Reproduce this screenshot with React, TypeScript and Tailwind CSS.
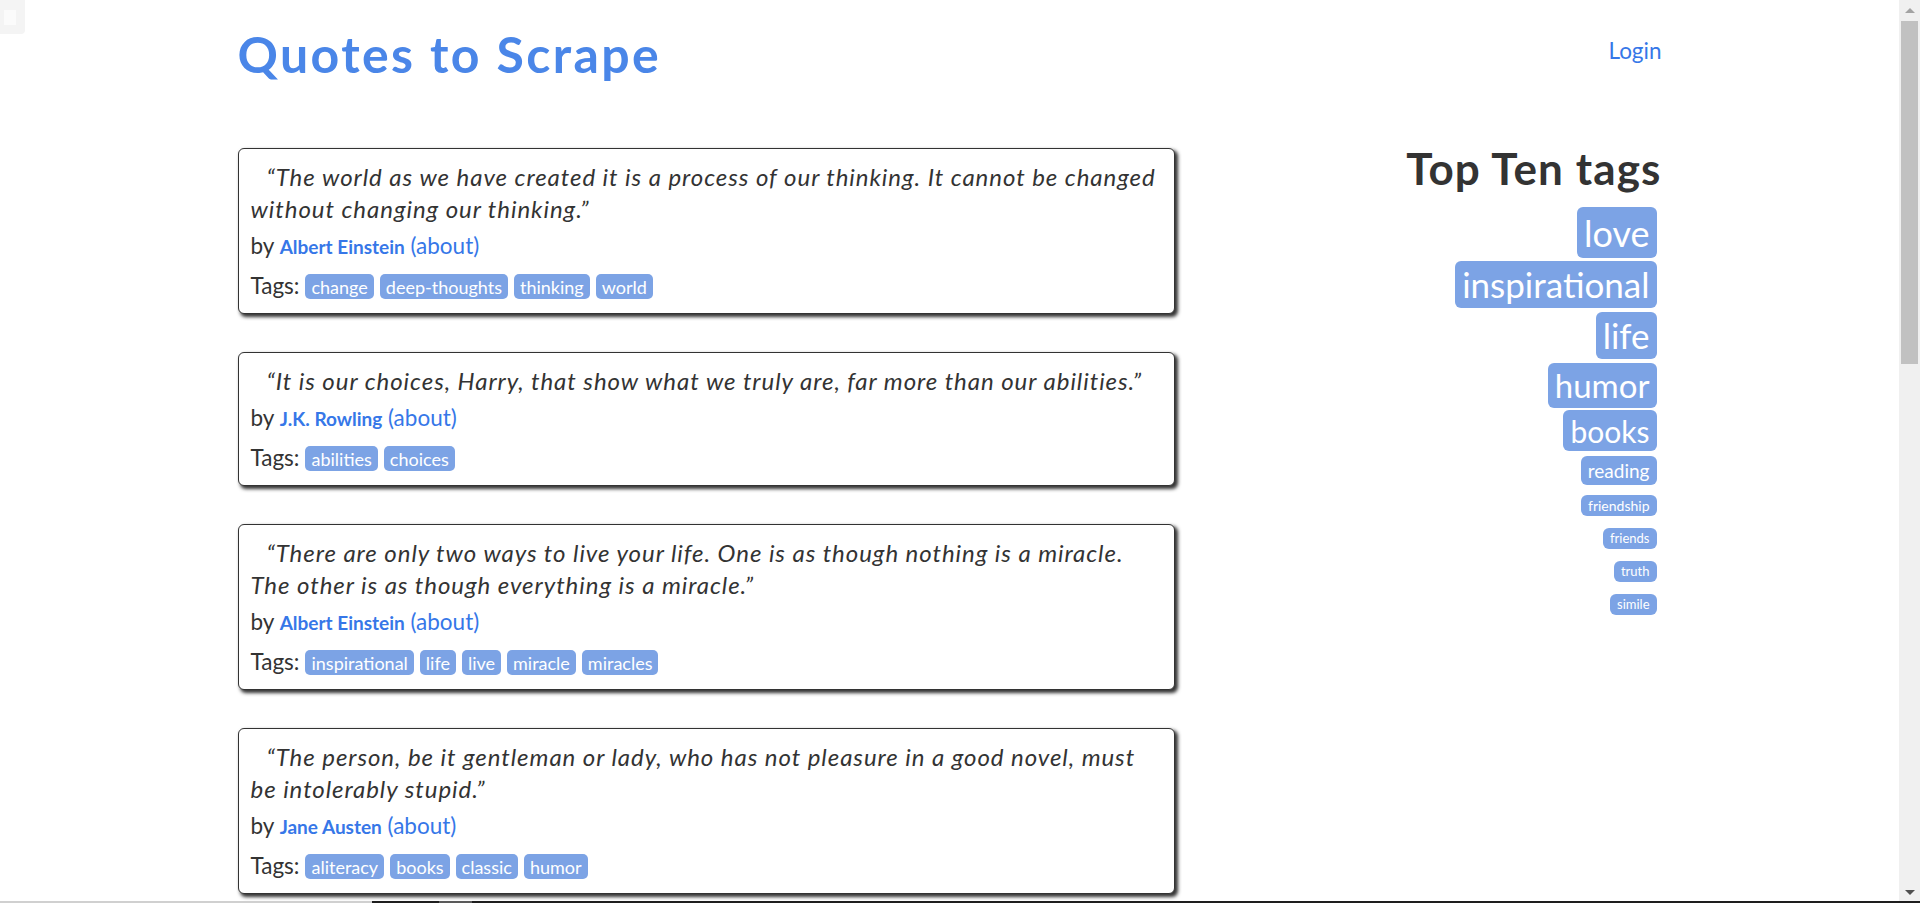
const quotes = [
  {
    text: "The world as we have created it is a process of our thinking. It cannot be changed without changing our thinking.",
    author: "Albert Einstein",
    tags: ["change", "deep-thoughts", "thinking", "world"],
  },
  {
    text: "It is our choices, Harry, that show what we truly are, far more than our abilities.",
    author: "J.K. Rowling",
    tags: ["abilities", "choices"],
  },
  {
    text: "There are only two ways to live your life. One is as though nothing is a miracle. The other is as though everything is a miracle.",
    author: "Albert Einstein",
    tags: ["inspirational", "life", "live", "miracle", "miracles"],
  },
  {
    text: "The person, be it gentleman or lady, who has not pleasure in a good novel, must be intolerably stupid.",
    author: "Jane Austen",
    tags: ["aliteracy", "books", "classic", "humor"],
  },
];

// top ten tags: size, box height and gap above, measured off the page
const topTags = [
  { name: "love", cls: "mt-[17px] h-[51px] text-[36px]" },
  { name: "inspirational", cls: "mt-[3px] h-[47px] text-[35px]" },
  { name: "life", cls: "mt-[4px] h-[47px] text-[35px]" },
  { name: "humor", cls: "mt-[4px] h-[45px] text-[33px]" },
  { name: "books", cls: "mt-[2px] h-[41px] text-[30px]" },
  { name: "reading", cls: "mt-[5px] h-[29px] text-[19px]" },
  { name: "friendship", cls: "mt-[10px] h-[21px] text-[14px]" },
  { name: "friends", cls: "mt-[12px] h-[21px] text-[13px]" },
  { name: "truth", cls: "mt-[12px] h-[21px] text-[13px]" },
  { name: "simile", cls: "mt-[12px] h-[21px] text-[13px]" },
];

function QuoteCard({ text, author, tags }: { text: string; author: string; tags: string[] }) {
  return (
    <div className="w-[937px] rounded-[6px] border border-[#333] bg-white pt-[12px] pr-[9px] pb-[12px] pl-[12px] shadow-[2.5px_2.5px_3.75px_#333]">
      <p className="indent-[16px] text-[24px] leading-[32px] tracking-[0.95px] italic text-[#333]">“{text}”</p>
      <p className="mt-[5px] text-[22.5px] leading-[32px] text-[#333]">
        by{" "}
        <a href="#" className="text-[19px] font-bold text-[#3677e8]">
          {author}
        </a>{" "}
        <a href="#" className="text-[#3677e8]">
          (about)
        </a>
      </p>
      <div className="mt-[7px] flex h-[31px] items-baseline gap-[6px] text-[22.5px] leading-[31px] text-[#333]">
        <span>Tags:</span>
        {tags.map((t) => (
          <a
            key={t}
            href="#"
            className="inline-block rounded-[5px] bg-[#7ca3e5] px-[6px] pt-[2px] pb-[1px] text-[18px] leading-[22px] text-white"
          >
            {t}
          </a>
        ))}
      </div>
    </div>
  );
}

export default function App() {
  return (
    <div className="flex h-[903px] w-[1920px] flex-col overflow-hidden bg-white font-['Lato',sans-serif]">
      <div className="flex min-h-0 flex-1">
        <div className="relative h-full w-[1899px] overflow-hidden">
          <div className="absolute top-0 left-0 h-[34px] w-[25px] rounded-br-[4px] bg-[#f4f4f4]">
            <div className="mt-[10px] ml-[4px] h-[15px] w-[12px] bg-[#fbfbfb]" />
          </div>

          <div className="mx-auto w-[1424px]">
            <header className="flex h-[148px] items-start justify-between">
              <h1 className="pt-[29px] text-[50px] leading-[50px] font-bold tracking-[2.4px] text-[#4a86e8]">
                Quotes to Scrape
              </h1>
              <a href="#" className="pt-[35px] text-[22.5px] leading-[32px] text-[#3677e8]">
                Login
              </a>
            </header>

            <div className="flex">
              <div className="flex w-[937px] flex-col gap-[38px]">
                {quotes.map((q, i) => (
                  <QuoteCard key={i} {...q} />
                ))}
              </div>

              <div className="flex flex-1 flex-col items-end">
                <h2 className="-mt-[2px] text-[44px] leading-[44px] font-bold tracking-[1.1px] text-[#333]">
                  Top Ten tags
                </h2>
                <div className="mr-[5px] flex flex-col items-end">
                  {topTags.map((t) => (
                    <a
                      key={t.name}
                      href="#"
                      className={`flex items-center rounded-[6px] bg-[#7ca3e5] px-[7px] leading-none text-white ${t.cls}`}
                    >
                      {t.name}
                    </a>
                  ))}
                </div>
              </div>
            </div>
          </div>
        </div>

        {/* scrollbar */}
        <div className="flex h-full w-[21px] flex-col items-center bg-[#f0f0f0]">
          <div className="mt-[8px] h-0 w-0 border-x-[5px] border-b-[5px] border-x-transparent border-b-[#a3a3a3]" />
          <div className="mt-[8px] h-[343px] w-[17px] bg-[#c1c1c1]" />
          <div className="mt-auto mb-[6px] h-0 w-0 border-x-[5px] border-t-[5px] border-x-transparent border-t-[#505050]" />
        </div>
      </div>

      <div className="flex h-[2px]">
        <div className="w-[372px] bg-[#d0d0d0]" />
        <div className="w-[67px] bg-[#1e1e1e]" />
        <div className="w-[33px] bg-[#5a5a5a]" />
        <div className="flex-1 bg-[#1e1e1e]" />
      </div>
    </div>
  );
}
